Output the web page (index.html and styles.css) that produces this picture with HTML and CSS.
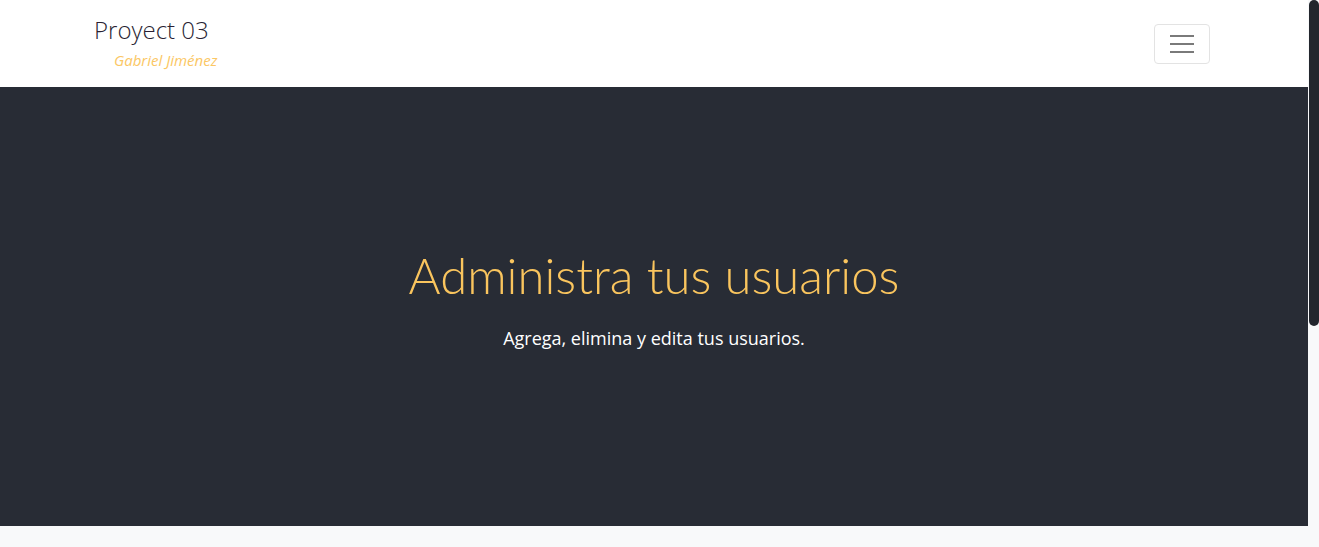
FILE: index.html
```html
<!DOCTYPE html>
<html lang="es">
<head>
<meta charset="utf-8">
<title>Proyect 03</title>
<link rel="stylesheet" href="styles.css">
</head>
<body>
<nav class="navbar">
  <div class="container nav-inner">
    <a class="brand" href="#">
      <span class="brand-title">Proyect 03</span>
      <span class="brand-sub">Gabriel Jiménez</span>
    </a>
    <button class="toggler" type="button" aria-label="Menú">
      <span class="bar"></span><span class="bar"></span><span class="bar"></span>
    </button>
  </div>
</nav>
<header class="hero">
  <h1 class="hero-title">Administra tus usuarios</h1>
  <p class="hero-lead">Agrega, elimina y edita tus usuarios.</p>
</header>
<main class="content"></main>
<div class="scroll-thumb" aria-hidden="true"></div>
</body>
</html>
```
FILE: styles.css
```css
* { box-sizing: border-box; }
html {
  margin: 0;
  padding: 0;
  background: #f8f9fa;
  overflow: hidden;
}
body {
  margin: 0 11px 0 0;
  padding: 0;
  font-family: "Open Sans", "Liberation Sans", sans-serif;
  background: #f8f9fa;
  color: #212529;
}
.navbar {
  background: #ffffff;
  height: 87px;
}
.container {
  max-width: 1140px;
  margin: 0 auto;
  padding: 0 15px;
}
.nav-inner {
  display: flex;
  justify-content: space-between;
  align-items: flex-start;
  height: 100%;
}
.brand {
  display: flex;
  flex-direction: column;
  text-decoration: none;
  margin-left: -5px;
  padding-top: 14px;
}
.brand-title {
  font-size: 24px;
  font-weight: 300;
  color: #2a1f33;
  line-height: 32px;
}
.brand-sub {
  font-size: 15px;
  font-style: italic;
  color: #fbc764;
  padding-left: 20px;
  line-height: 20px;
  margin-top: 4px;
}
.toggler {
  margin-top: 24px;
  margin-right: -1px;
  width: 56px;
  height: 40px;
  background: transparent;
  border: 1px solid #e3e3e3;
  border-radius: 4px;
  display: flex;
  flex-direction: column;
  justify-content: center;
  align-items: center;
  gap: 6px;
  padding: 0;
}
.toggler .bar {
  display: block;
  width: 24px;
  height: 2px;
  background: #7a7a7a;
}
.hero {
  background: #282c35;
  height: 439px;
  display: flex;
  flex-direction: column;
  align-items: center;
  justify-content: center;
  padding-bottom: 17px;
}
.hero-title {
  margin: 0;
  font-family: "Lato", "Open Sans", sans-serif;
  font-weight: 300;
  font-size: 49px;
  color: #fac55e;
  line-height: 1.2;
}
.hero-lead {
  margin: 22px 0 0;
  font-size: 18px;
  color: #ffffff;
  font-weight: 400;
}
.content {
  height: 600px;
}
.scroll-thumb {
  position: fixed;
  top: 0;
  right: 0;
  width: 10px;
  height: 326px;
  border-radius: 5px;
  background: #22262d;
}
```
